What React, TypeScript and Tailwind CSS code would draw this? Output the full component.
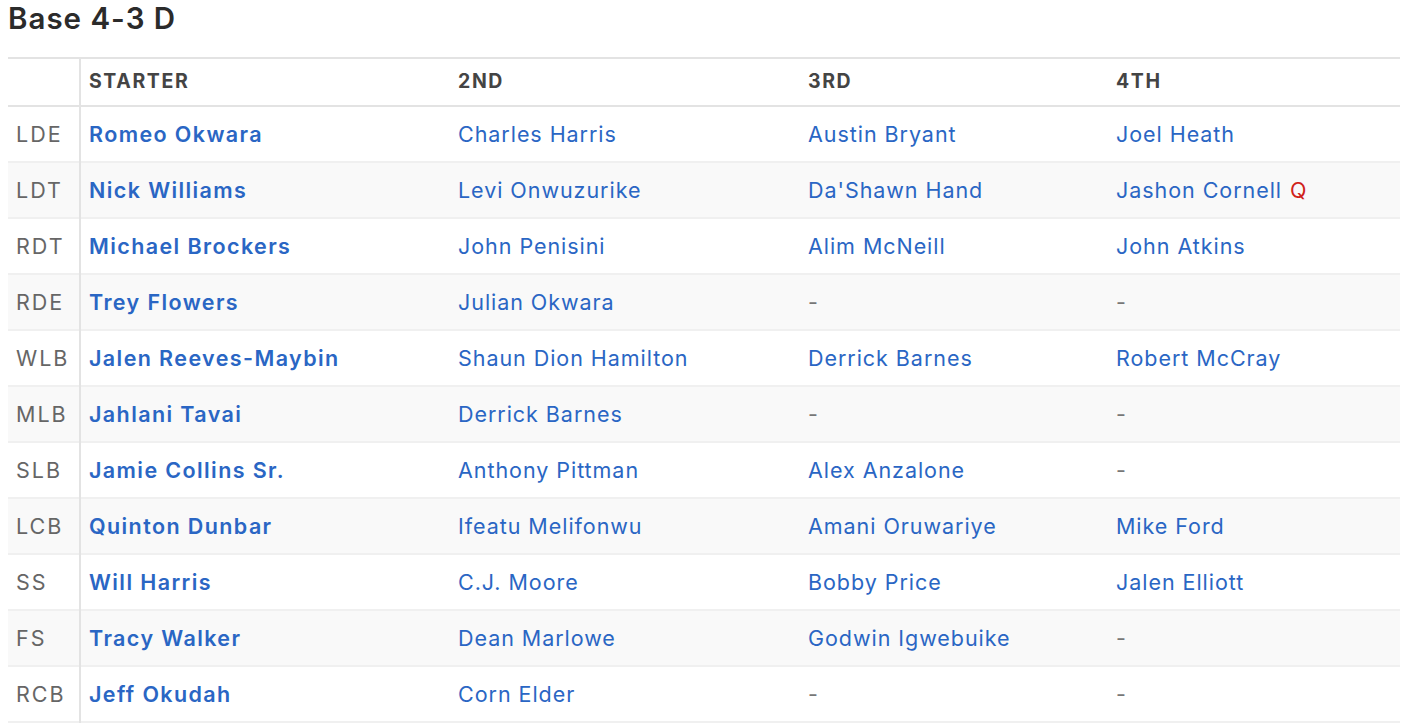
const rows: [string, string, string, string, string][] = [
  ["LDE", "Romeo Okwara", "Charles Harris", "Austin Bryant", "Joel Heath"],
  ["LDT", "Nick Williams", "Levi Onwuzurike", "Da'Shawn Hand", "Jashon Cornell"],
  ["RDT", "Michael Brockers", "John Penisini", "Alim McNeill", "John Atkins"],
  ["RDE", "Trey Flowers", "Julian Okwara", "-", "-"],
  ["WLB", "Jalen Reeves-Maybin", "Shaun Dion Hamilton", "Derrick Barnes", "Robert McCray"],
  ["MLB", "Jahlani Tavai", "Derrick Barnes", "-", "-"],
  ["SLB", "Jamie Collins Sr.", "Anthony Pittman", "Alex Anzalone", "-"],
  ["LCB", "Quinton Dunbar", "Ifeatu Melifonwu", "Amani Oruwariye", "Mike Ford"],
  ["SS", "Will Harris", "C.J. Moore", "Bobby Price", "Jalen Elliott"],
  ["FS", "Tracy Walker", "Dean Marlowe", "Godwin Igwebuike", "-"],
  ["RCB", "Jeff Okudah", "Corn Elder", "-", "-"],
];

function Name({ value, strong, tag }: { value: string; strong?: boolean; tag?: string }) {
  if (value === "-") return <span className="text-[#777]">-</span>;
  return (
    <>
      <a
        href="#"
        className={strong ? "font-semibold tracking-[1.4px] text-[#2a66c4]" : "tracking-[0.95px] text-[#2a66c4]"}
      >
        {value}
      </a>
      {tag && <span className="ml-[8px] text-[#d0231b]">{tag}</span>}
    </>
  );
}

export default function App() {
  return (
    <div className="bg-white px-2 font-['Inter','Liberation_Sans',sans-serif] text-[#333]">
      <h2 className="text-[29.5px] leading-[36px] font-semibold tracking-[1px] text-[#2b2b2b]">Base 4-3 D</h2>
      <table className="mt-[21px] w-[1392px] table-fixed border-collapse text-[21.5px]">
        <colgroup>
          <col className="w-[72px]" />
          <col className="w-[370px]" />
          <col className="w-[350px]" />
          <col className="w-[308px]" />
          <col />
        </colgroup>
        <thead>
          <tr className="h-[48px] border-y-2 border-[#e3e3e3]">
            <th className="border-r-2 border-[#e3e3e3]" />
            <th className="pl-2 text-left text-[19.5px] font-bold tracking-[1.6px] text-[#444]">STARTER</th>
            <th className="pl-2 text-left text-[19.5px] font-bold tracking-[1.6px] text-[#444]">2ND</th>
            <th className="pl-2 text-left text-[19.5px] font-bold tracking-[1.6px] text-[#444]">3RD</th>
            <th className="pl-2 text-left text-[19.5px] font-bold tracking-[1.6px] text-[#444]">4TH</th>
          </tr>
        </thead>
        <tbody>
          {rows.map(([pos, a, b, c, d], i) => (
            <tr key={pos} className={`h-[56px] border-b-2 border-[#f0f0f0] ${i % 2 === 1 ? "bg-[#f9f9f9]" : "bg-white"}`}>
              <td className="border-r-2 border-[#e3e3e3] pl-2 tracking-[2px] text-[#666]">{pos}</td>
              <td className="pl-2"><Name value={a} strong /></td>
              <td className="pl-2"><Name value={b} /></td>
              <td className="pl-2"><Name value={c} /></td>
              <td className="pl-2"><Name value={d} tag={pos === "LDT" ? "Q" : undefined} /></td>
            </tr>
          ))}
        </tbody>
      </table>
    </div>
  );
}
